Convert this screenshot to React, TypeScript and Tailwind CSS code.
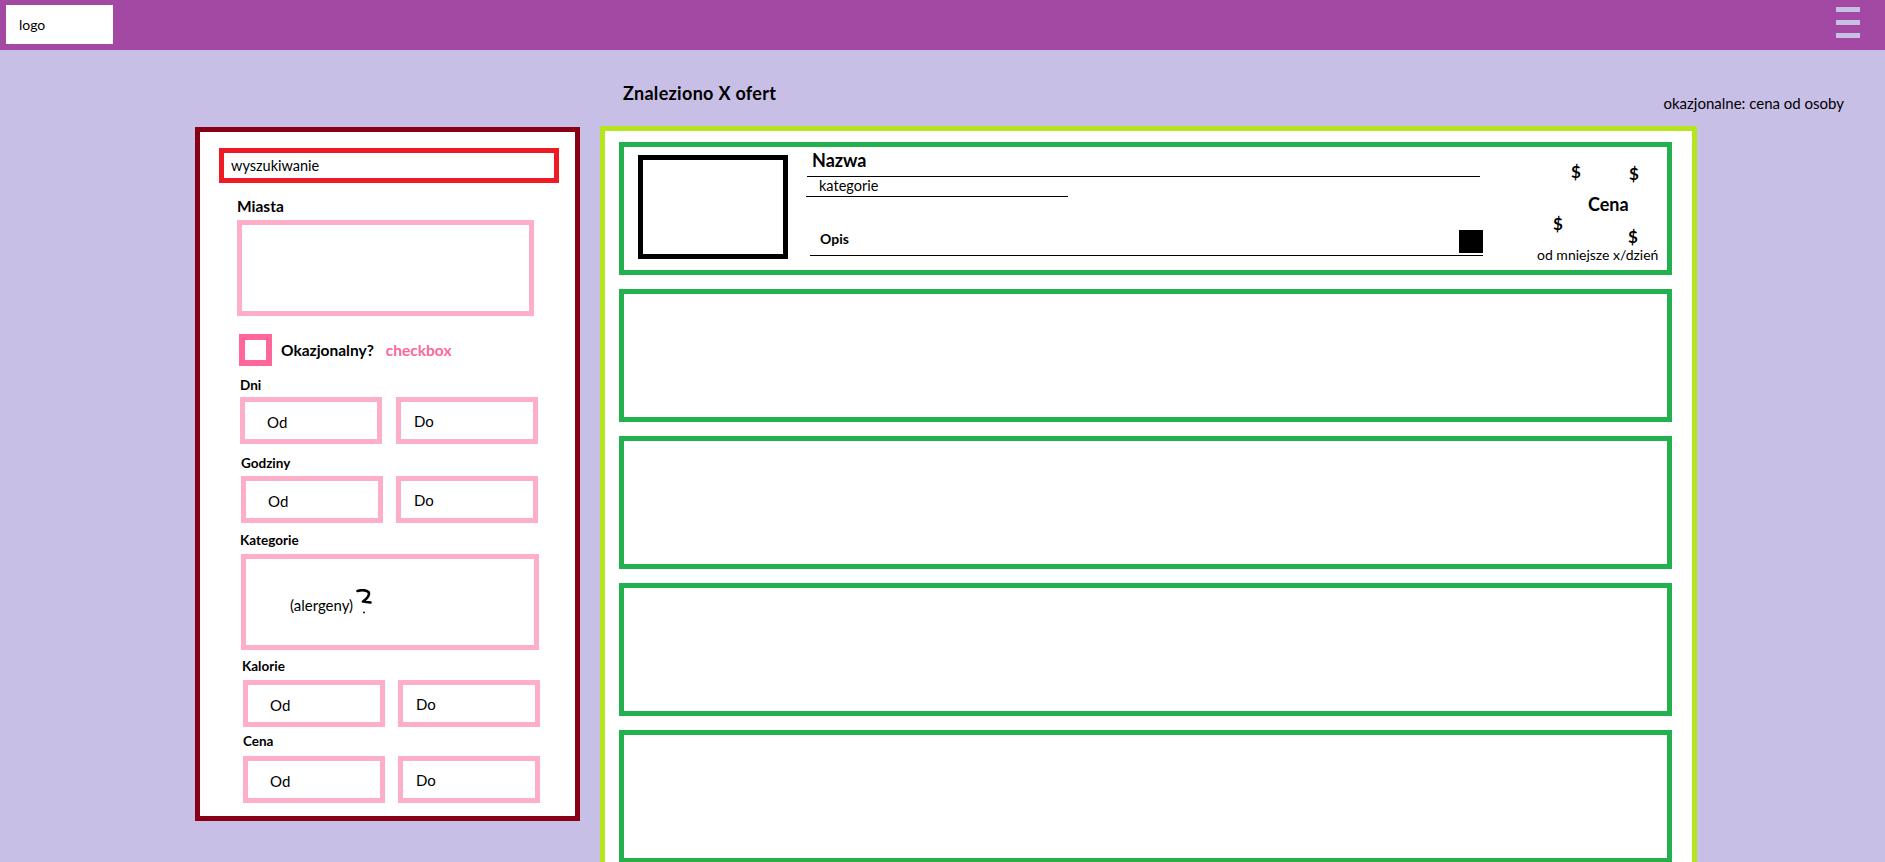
const font = { fontFamily: "Lato, 'Open Sans', sans-serif" };

function RangeRow({ ml, gap }: { ml: string; gap: string }) {
  return (
    <div className={`flex ${ml} ${gap}`}>
      <div className="flex h-[47px] w-[142px] items-center border-[5px] border-[#ffaec9] pl-[22px] pt-[3px] text-[15px] leading-[18px]">
        Od
      </div>
      <div className="flex h-[47px] w-[142px] items-center border-[5px] border-[#ffaec9] pl-[13px] text-[15px] leading-[18px]">
        Do
      </div>
    </div>
  );
}

function Label({ children, className }: { children: string; className: string }) {
  return <div className={`text-[13.5px] font-bold leading-[16px] ${className}`}>{children}</div>;
}

function Sidebar() {
  return (
    <aside className="mt-[77px] flex h-[694px] w-[385px] shrink-0 flex-col items-start border-[5px] border-[#880015] bg-white">
      <div className="ml-[19px] mt-[16px] flex h-[35px] w-[340px] items-center border-[5px] border-[#ed1c24] pl-[7px] text-[14.5px] leading-[17px]">
        wyszukiwanie
      </div>
      <div className="ml-[37px] mt-[14px] text-[15.5px] font-bold leading-[18px]">Miasta</div>
      <div className="ml-[37px] mt-[5px] h-[96px] w-[297px] border-[5px] border-[#ffaec9]" />
      <div className="ml-[39px] mt-[18px] flex h-[32px] items-center">
        <div className="h-[32px] w-[33px] border-[6px] border-[#ff6699]" />
        <span className="ml-[9px] text-[15.5px] font-bold leading-[19px]">Okazjonalny?</span>
        <span className="ml-[12px] text-[15.5px] font-bold leading-[19px] text-[#ff6699]">checkbox</span>
      </div>
      <Label className="ml-[40px] mt-[11px]">Dni</Label>
      <div className="mt-[4px]">
        <RangeRow ml="ml-[40px]" gap="gap-[14px]" />
      </div>
      <Label className="ml-[41px] mt-[11px]">Godziny</Label>
      <div className="mt-[5px]">
        <RangeRow ml="ml-[41px]" gap="gap-[13px]" />
      </div>
      <Label className="ml-[40px] mt-[9px]">Kategorie</Label>
      <div className="ml-[41px] mt-[6px] flex h-[96px] w-[298px] items-start border-[5px] border-[#ffaec9] pl-[44px]">
        <span className="mt-[38px] text-[15px] leading-[17px]">(alergeny)</span>
        <svg className="ml-[3px] mt-[30px]" width="16" height="26" viewBox="0 0 16 26">
          <path
            d="M1.5 2 C5 1 10 1 12.5 3 C14 5.5 11.5 9.5 7 12.5 L14.5 13.5"
            fill="none"
            stroke="#000"
            strokeWidth="2.6"
            strokeLinecap="round"
            strokeLinejoin="round"
          />
          <circle cx="8" cy="23.5" r="0.9" fill="#000" />
        </svg>
      </div>
      <Label className="ml-[42px] mt-[8px]">Kalorie</Label>
      <div className="mt-[6px]">
        <RangeRow ml="ml-[43px]" gap="gap-[13px]" />
      </div>
      <Label className="ml-[43px] mt-[6px]">Cena</Label>
      <div className="mt-[7px]">
        <RangeRow ml="ml-[43px]" gap="gap-[13px]" />
      </div>
    </aside>
  );
}

function OfferCard() {
  return (
    <div className="flex h-[133px] w-[1053px] items-start border-[5px] border-[#22b14c]">
      <div className="ml-[14px] mt-[8px] h-[104px] w-[150px] shrink-0 border-[5px] border-black" />
      <div className="ml-[18px] mt-[3px] flex w-[677px] flex-col">
        <div className="pl-[6px] text-[18px] font-bold leading-[20px]">Nazwa</div>
        <div className="ml-[1px] mt-[6px] h-px w-[673px] bg-black" />
        <div className="pl-[13px] text-[14.5px] leading-[17px]">kategorie</div>
        <div className="mt-[2px] h-px w-[262px] bg-black" />
        <div className="mt-[33px] flex items-start">
          <span className="pl-[14px] text-[14px] font-bold leading-[17px]">Opis</span>
          <div className="ml-auto h-[23px] w-[24px] bg-black" />
        </div>
        <div className="ml-[4px] mt-[2px] h-px w-[673px] bg-black" />
      </div>
      <div className="ml-[54px] mt-[15px] flex w-[130px] flex-col">
        <div className="flex h-[19px] items-start text-[17px] font-bold leading-[19px]">
          <span className="ml-[34px]">$</span>
          <span className="ml-[48px] mt-[2px]">$</span>
        </div>
        <div className="ml-[51px] mt-[13px] text-[18px] font-bold leading-[20px]">Cena</div>
        <div className="flex h-[32px] items-start text-[17px] font-bold leading-[19px]">
          <span className="ml-[16px]">$</span>
          <span className="ml-[65px] mt-[13px]">$</span>
        </div>
        <div className="whitespace-nowrap text-[14px] leading-[17px]">od mniejsze x/dzień</div>
      </div>
    </div>
  );
}

function EmptyCard() {
  return <div className="h-[133px] w-[1053px] shrink-0 border-[5px] border-[#22b14c]" />;
}

export default function App() {
  return (
    <div className="h-[862px] overflow-hidden bg-[#c8bfe7] text-black" style={font}>
      <header className="flex h-[50px] items-start justify-between bg-[#a349a4]">
        <div className="ml-[6px] mt-[5px] flex h-[39px] w-[107px] items-center bg-white pl-[13px] text-[14px] leading-[18px]">
          logo
        </div>
        <div className="mr-[25px] mt-[7px] flex flex-col gap-[8px]">
          <span className="block h-[5px] w-[24px] bg-[#c8bfe7]" />
          <span className="block h-[5px] w-[24px] bg-[#c8bfe7]" />
          <span className="block h-[5px] w-[24px] bg-[#c8bfe7]" />
        </div>
      </header>
      <div className="flex items-start pl-[195px]">
        <Sidebar />
        <main className="ml-[20px] mt-[32px] flex w-[1244px] flex-col">
          <div className="flex items-start justify-between">
            <h1 className="pl-[23px] text-[18px] font-bold leading-[22px] tracking-[0.3px]">Znaleziono X ofert</h1>
            <p className="mt-[13px] text-[15px] leading-[17px]">okazjonalne: cena od osoby</p>
          </div>
          <section className="mt-[14px] flex w-[1097px] flex-col gap-[14px] border-[5px] border-[#b5e61d] bg-white pb-[14px] pl-[14px] pt-[11px]">
            <OfferCard />
            <EmptyCard />
            <EmptyCard />
            <EmptyCard />
            <EmptyCard />
          </section>
        </main>
      </div>
    </div>
  );
}
